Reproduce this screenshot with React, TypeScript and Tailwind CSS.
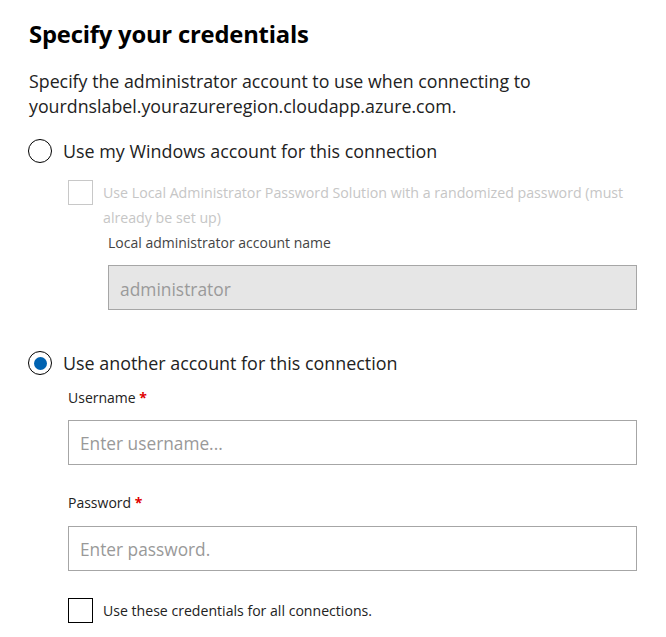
import React from 'react';

const font = { fontFamily: '"Open Sans", "Noto Sans", sans-serif' };

const Radio: React.FC<{ checked?: boolean; label: string }> = ({ checked, label }) => (
  <div className="flex items-center h-[30px]">
    <div className="w-[24px] h-[24px] rounded-full border-[1.5px] border-black flex items-center justify-center shrink-0 ml-[28px]">
      {checked && <div className="w-[13px] h-[13px] rounded-full bg-[#0063b1]" />}
    </div>
    <span className="ml-[11px] text-[17.9px] text-[#222]">{label}</span>
  </div>
);

export default function App() {
  return (
    <div className="w-[666px] h-[637px] bg-white text-[#222] overflow-hidden" style={font}>
      {/* Title */}
      <h1 className="pl-[29px] pt-[17px] text-[23.8px] font-bold text-black leading-[34px] tracking-[-0.2px]">
        Specify your credentials
      </h1>

      {/* Description */}
      <p className="pl-[29px] pt-[18px] text-[17.8px] leading-[25px] text-[#222]">
        Specify the administrator account to use when connecting to
        <br />
        yourdnslabel.yourazureregion.cloudapp.azure.com.
      </p>

      {/* Windows account option */}
      <div className="mt-[17px]">
        <Radio label="Use my Windows account for this connection" />
      </div>

      <div className="pl-[68px] pt-[14px]">
        <div className="flex items-start">
          <div className="w-[25px] h-[25px] border border-[#c8c8c8] shrink-0" />
          <p className="ml-[10px] text-[14.2px] leading-[25px] text-[#c6c6c6]">
            Use Local Administrator Password Solution with a randomized password (must
            <br />
            already be set up)
          </p>
        </div>
        <div className="pl-[40px]">
          <div className="text-[14px] leading-[25px] text-[#444]">
            Local administrator account name
          </div>
          <div className="mt-[10px] w-[529px] h-[45px] bg-[#e6e6e6] border border-[#a6a6a6] flex items-center px-[11px] pt-[3px] text-[17.4px] text-[#9a9a9a]">
            administrator
          </div>
        </div>
      </div>

      {/* Another account option */}
      <div className="mt-[38px]">
        <Radio checked label="Use another account for this connection" />
      </div>

      <div className="pl-[68px] pt-[10px]">
        <div className="text-[14px] leading-[20px] text-[#222]">
          Username <span className="text-[#e00000] font-bold">*</span>
        </div>
        <div className="mt-[12px] w-[569px] h-[45px] border border-[#a6a6a6] flex items-center px-[11px] pt-[3px] text-[17.3px] text-[#999]">
          Enter username...
        </div>

        <div className="mt-[28px] text-[14px] leading-[20px] text-[#222]">
          Password <span className="text-[#e00000] font-bold">*</span>
        </div>
        <div className="mt-[13px] w-[569px] h-[45px] border border-[#a6a6a6] flex items-center px-[11px] pt-[2px] text-[17.3px] text-[#999]">
          Enter password.
        </div>

        <div className="mt-[27px] flex items-center">
          <div className="w-[25px] h-[25px] border border-black shrink-0" />
          <span className="ml-[10px] text-[14.1px] text-[#222]">
            Use these credentials for all connections.
          </span>
        </div>
      </div>
    </div>
  );
}
